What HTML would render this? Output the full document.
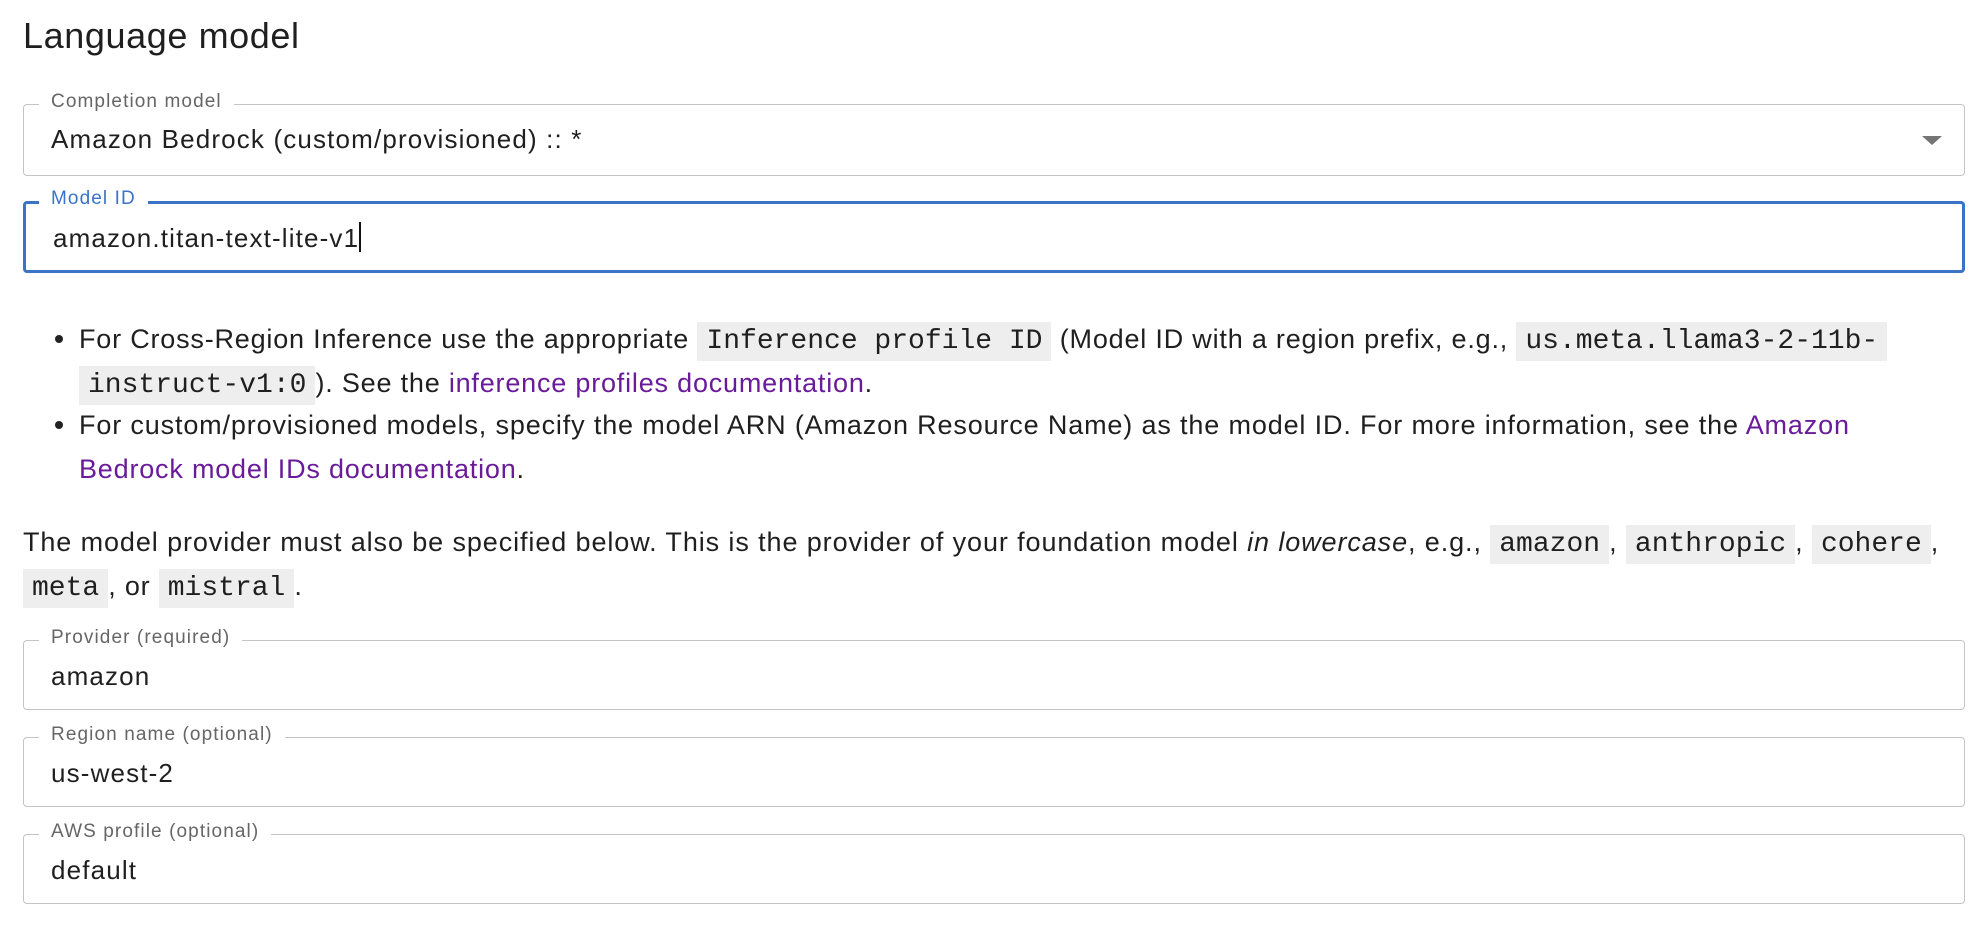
<!DOCTYPE html>
<html><head><meta charset="utf-8"><style>
*{box-sizing:border-box;margin:0;padding:0}
body{width:1986px;height:932px;background:#fff;font-family:"Liberation Sans",sans-serif;color:#1f1f1f;position:relative;overflow:hidden}
.h{position:absolute;left:23px;top:14px;font-size:36px;line-height:44px;letter-spacing:0.6px}
.box{position:absolute;left:23px;width:1942px;border:1.5px solid #c4c4c4;border-radius:4px}
.box .lab{position:absolute;left:15px;top:-14px;background:#fff;padding:0 12px 0 12px;font-size:19px;color:#666;line-height:22px;letter-spacing:1.1px}
.box .val{position:absolute;left:27px;font-size:26px;line-height:28px;letter-spacing:1.15px}
.blue{border:3px solid #3a73c8}
.blue .lab{color:#3a73c8;left:13px;top:-16px}
.t{position:absolute;white-space:nowrap;font-size:27px;line-height:44px;letter-spacing:0.8px}
code{font-family:"Liberation Mono",monospace;font-size:28px;background:#eeeeee;padding:4px 9px;letter-spacing:0}
a{color:#6a1b9a;text-decoration:none}
.dot{position:absolute;width:8px;height:8px;border-radius:50%;background:#222}
</style></head><body>
<div class="h">Language model</div>

<div class="box" style="top:104px;height:72px"><div class="lab">Completion model</div><div class="val" style="top:20px">Amazon Bedrock (custom/provisioned) :: *</div>
<div style="position:absolute;left:1898px;top:31px;width:0;height:0;border-left:10px solid transparent;border-right:10px solid transparent;border-top:9px solid #757575"></div></div>

<div class="box blue" style="top:201px;height:72px"><div class="lab">Model ID</div><div class="val" style="top:18px">amazon.titan-text-lite-v1<span style="display:inline-block;width:2px;height:30px;background:#111;vertical-align:-5px"></span></div></div>

<div class="dot" style="left:55px;top:335px"></div>
<div class="t" style="left:79px;top:317px">For Cross-Region Inference use the appropriate <code>Inference profile ID</code> (Model ID with a region prefix, e.g., <code>us.meta.llama3-2-11b-</code></div>
<div class="t" style="left:79px;top:361px"><code>instruct-v1:0</code>). See the <a>inference profiles documentation</a>.</div>
<div class="dot" style="left:55px;top:421px"></div>
<div class="t" style="left:79px;top:403px;letter-spacing:0.85px">For custom/provisioned models, specify the model ARN (Amazon Resource Name) as the model ID. For more information, see the <a>Amazon</a></div>
<div class="t" style="left:79px;top:447px"><a>Bedrock model IDs documentation</a>.</div>

<div class="t" style="left:23px;top:520px;letter-spacing:0.9px">The model provider must also be specified below. This is the provider of your foundation model <i>in lowercase</i>, e.g., <code>amazon</code>, <code>anthropic</code>, <code>cohere</code>,</div>
<div class="t" style="left:23px;top:564px"><code>meta</code>, or <code>mistral</code>.</div>

<div class="box" style="top:640px;height:70px"><div class="lab">Provider (required)</div><div class="val" style="top:21px">amazon</div></div>
<div class="box" style="top:737px;height:70px"><div class="lab">Region name (optional)</div><div class="val" style="top:21px">us-west-2</div></div>
<div class="box" style="top:834px;height:70px"><div class="lab">AWS profile (optional)</div><div class="val" style="top:21px">default</div></div>
</body></html>
